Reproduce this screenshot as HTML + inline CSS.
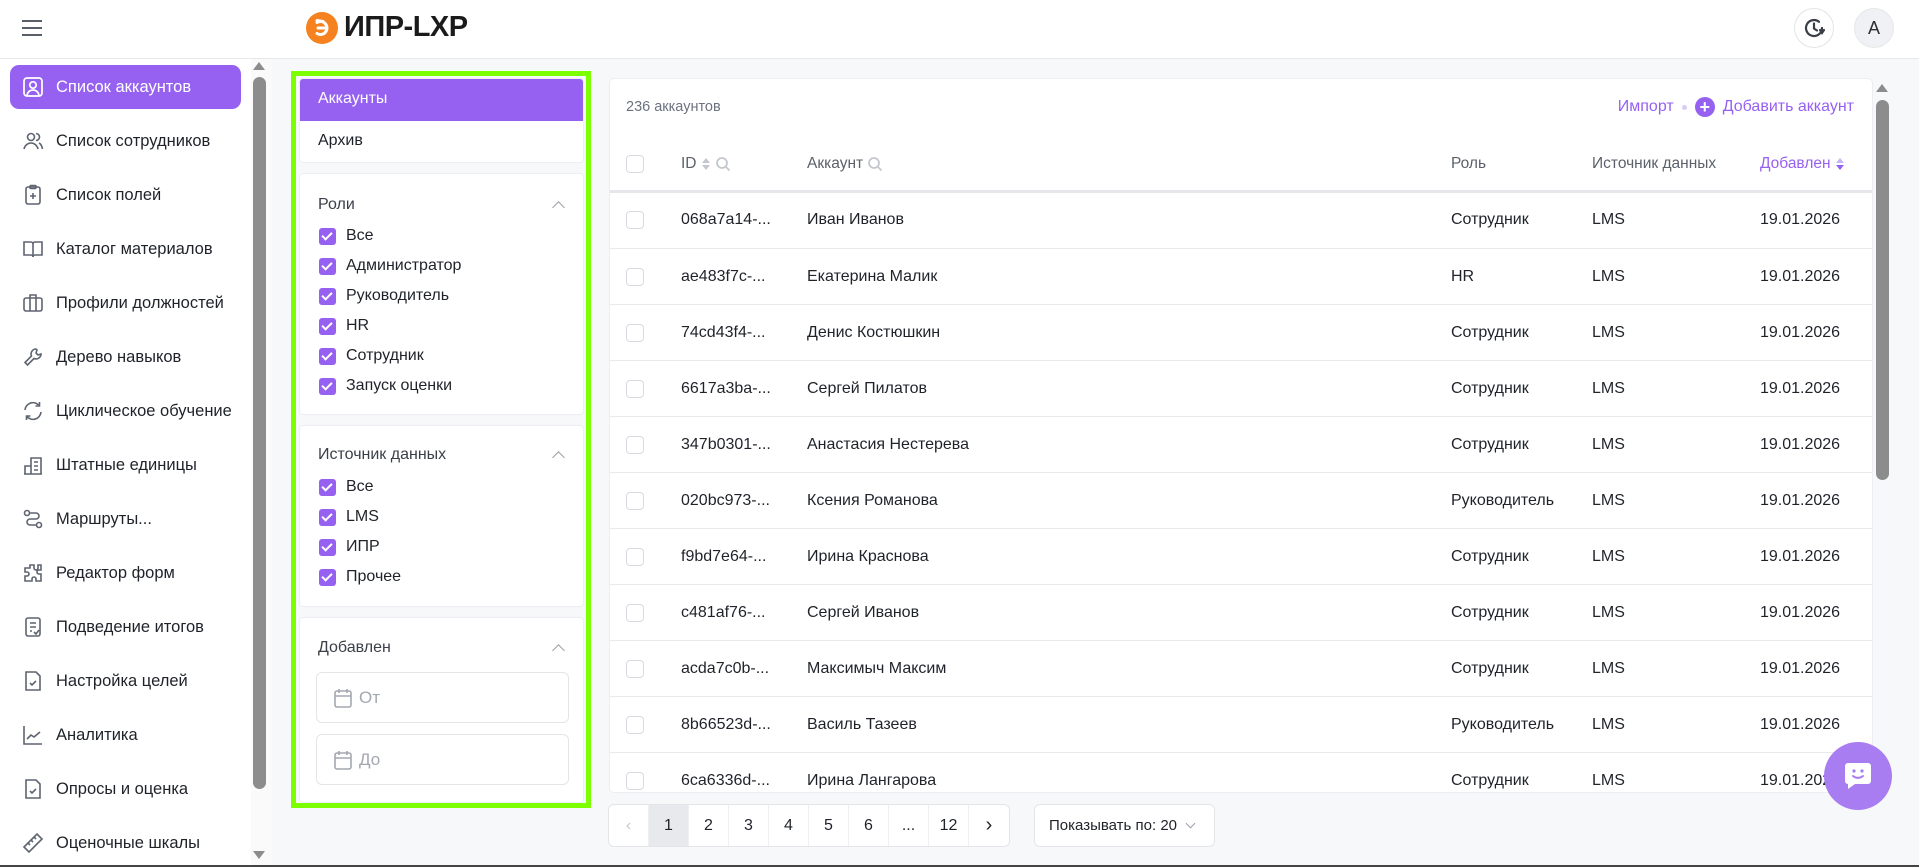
<!DOCTYPE html>
<html><head><meta charset="utf-8"><style>
*{box-sizing:border-box;margin:0;padding:0}
body{width:1919px;height:867px;overflow:hidden;background:#fff;font-family:"Liberation Sans",sans-serif;color:#1f2329;position:relative}
.a{position:absolute}
.hdr{left:0;top:0;width:1919px;height:59px;background:#fff;border-bottom:1px solid #e6e8ec}
.main{left:272px;top:59px;width:1647px;height:806px;background:#f7f8fa}
.nav{left:10px;width:231px;height:44px;border-radius:9px;font-size:16.5px;display:flex;align-items:center;padding-left:46px;color:#1f2329}
.nav svg{position:absolute;left:12px;top:11px}
.nav.act{background:#9661f1;color:#fff}
.sb{left:253px;top:77px;width:13px;height:712px;background:#8c8c8c;border-radius:7px}
.fp{left:291px;top:71px;width:300px;height:737px;border:5px solid #7cff00;background:#f7f8fa}
.card{background:#fff;border:1px solid #eceef1;border-radius:4px}
.cb{width:17px;height:17px;border-radius:3px;background:#9661f1;display:inline-block;position:relative}
.cb:after{content:"";position:absolute;left:5px;top:2px;width:4px;height:8px;border:solid #fff;border-width:0 2px 2px 0;transform:rotate(45deg)}
.fi{display:flex;align-items:center;gap:10px;font-size:16px;height:30px}
.ttl{font-size:16px;color:#3b4048}
.chev{width:9px;height:9px;border-left:1.5px solid #9aa0a8;border-top:1.5px solid #9aa0a8;transform:rotate(45deg)}
.inp{border:1px solid #e3e5e9;border-radius:6px;height:51px;display:flex;align-items:center;padding-left:16px;color:#a3a8b0;font-size:17px;gap:6px}
.tbl{left:609px;top:78px;width:1264px;height:715px;background:#fff;border:1px solid #eceef1;border-radius:5px;overflow:hidden}
.row{position:absolute;left:0;width:1264px;height:56px;border-top:1px solid #e8e9ec;font-size:16px;color:#1f2329}
.row span{position:absolute;top:19px}
.ck{position:absolute;left:16px;width:18px;height:18px;border:1px solid #d7dae0;border-radius:4px;background:#fff}
.pg{left:608px;top:804px;height:43px;display:flex;border:1px solid #e3e5e9;border-radius:6px;background:#fff;overflow:hidden}
.pg div{width:40px;height:41px;display:flex;align-items:center;justify-content:center;font-size:16px;border-right:1px solid #eef0f2}
.srt{display:inline-block;vertical-align:middle;margin-left:4px}
</style></head><body>
<div class="a hdr"></div>
<div class="a" style="left:22px;top:20px;width:20px;height:2px;background:#5a6069;box-shadow:0 7px 0 #5a6069,0 14px 0 #5a6069"></div>
<svg class="a" style="left:306px;top:12px" width="32" height="32" viewBox="0 0 32 32"><circle cx="16" cy="16" r="16" fill="#f5821f"/><path d="M11 10.5a6.5 6.5 0 1 1 0 11M12 16h8M17 9.5l-6 -1" stroke="#fff" stroke-width="3" fill="none" stroke-linecap="round"/></svg>
<div class="a" style="left:344px;top:11px;font-size:29px;font-weight:bold;color:#1b1b1b;letter-spacing:-0.5px">ИПР-LXP</div>
<div class="a" style="left:1794px;top:8px;width:40px;height:40px;border:1px solid #e2e4e8;border-radius:50%;background:#fff"></div>
<svg class="a" style="left:1803px;top:17px" width="22" height="22" viewBox="0 0 22 22" fill="none" stroke="#3a3f47" stroke-width="2.2" stroke-linecap="round"><path d="M19 11a8 8 0 1 1-3-6.2"/><path d="M11 6.5v5l3 2"/><path d="M17 13l2 3 2-3"/></svg>
<div class="a" style="left:1854px;top:8px;width:40px;height:40px;border-radius:50%;background:#f0f1f4;border:1px solid #e6e7ea;display:flex;align-items:center;justify-content:center;font-size:18px;color:#2b2f36">A</div>

<div class="a main"></div>
<div class="a" style="left:251px;top:59px;width:21px;height:806px;background:#fafafa"></div>
<div class="a" style="left:253px;top:62px;width:0;height:0;border-left:6.5px solid transparent;border-right:6.5px solid transparent;border-bottom:8px solid #8c8c8c"></div>
<div class="a sb"></div>
<div class="a" style="left:253px;top:851px;width:0;height:0;border-left:6.5px solid transparent;border-right:6.5px solid transparent;border-top:8px solid #8c8c8c"></div>

<div class="a nav act" style="top:65px"><svg width="22" height="22" viewBox="0 0 22 22" fill="none" stroke="#fff" stroke-width="1.7"><rect x="2" y="2" width="18" height="18" rx="3"/><circle cx="11" cy="9" r="3.2"/><path d="M5 19c1-3.5 3.5-5 6-5s5 1.5 6 5"/></svg>Список аккаунтов</div>
<div class="a nav" style="top:119px"><svg width="22" height="22" viewBox="0 0 22 22" fill="none" stroke="#5e6470" stroke-width="1.6"><circle cx="9" cy="7" r="3.5"/><path d="M2 19c1-4 4-6 7-6s6 2 7 6M14 3.5a3.5 3.5 0 0 1 0 7M17 13c2 1 3 3 3.5 6"/></svg>Список сотрудников</div>
<div class="a nav" style="top:173px"><svg width="22" height="22" viewBox="0 0 22 22" fill="none" stroke="#5e6470" stroke-width="1.6"><rect x="4" y="3" width="14" height="17" rx="2"/><rect x="8" y="1.5" width="6" height="3" rx="1"/><path d="M11 9v6M8 12h6"/></svg>Список полей</div>
<div class="a nav" style="top:227px"><svg width="22" height="22" viewBox="0 0 22 22" fill="none" stroke="#5e6470" stroke-width="1.6"><path d="M2 4h7a2 2 0 0 1 2 2v13a2 2 0 0 0-2-2H2zM20 4h-7a2 2 0 0 0-2 2v13a2 2 0 0 1 2-2h7z"/></svg>Каталог материалов</div>
<div class="a nav" style="top:281px"><svg width="22" height="22" viewBox="0 0 22 22" fill="none" stroke="#5e6470" stroke-width="1.6"><rect x="2" y="6" width="18" height="13" rx="2"/><path d="M8 6V3h6v3M8 6v13M14 6v13"/></svg>Профили должностей</div>
<div class="a nav" style="top:335px"><svg width="22" height="22" viewBox="0 0 22 22" fill="none" stroke="#5e6470" stroke-width="1.6"><path d="M14 3a5 5 0 0 0-4.5 7L3 16.5 5.5 19l6.5-6.5A5 5 0 0 0 19 8l-3 1-2-2 1-3z"/></svg>Дерево навыков</div>
<div class="a nav" style="top:389px"><svg width="22" height="22" viewBox="0 0 22 22" fill="none" stroke="#5e6470" stroke-width="1.6"><path d="M3 10a8 8 0 0 1 14.5-4M19 12a8 8 0 0 1-14.5 4M17.5 2v4h-4M4.5 20v-4h4"/></svg>Циклическое обучение</div>
<div class="a nav" style="top:443px"><svg width="22" height="22" viewBox="0 0 22 22" fill="none" stroke="#5e6470" stroke-width="1.6"><path d="M2 20h18M3 20v-8h6M9 20V4h10v16M12 8h4M12 12h4M12 16h4"/></svg>Штатные единицы</div>
<div class="a nav" style="top:497px"><svg width="22" height="22" viewBox="0 0 22 22" fill="none" stroke="#5e6470" stroke-width="1.6"><circle cx="5" cy="5" r="2.5"/><circle cx="17" cy="17" r="2.5"/><path d="M8 5h6a3 3 0 0 1 0 6H8a3 3 0 0 0 0 6h6"/></svg>Маршруты...</div>
<div class="a nav" style="top:551px"><svg width="22" height="22" viewBox="0 0 22 22" fill="none" stroke="#5e6470" stroke-width="1.6"><path d="M8 3h4v3a2 2 0 0 0 4 0V3h3v5h-2a2 2 0 0 0 0 4h2v7h-5v-2a2 2 0 0 0-4 0v2H3v-5h2a2 2 0 0 0 0-4H3V6h5z"/></svg>Редактор форм</div>
<div class="a nav" style="top:605px"><svg width="22" height="22" viewBox="0 0 22 22" fill="none" stroke="#5e6470" stroke-width="1.6"><rect x="4" y="2" width="14" height="18" rx="2"/><path d="M8 7h6M8 11h6M8 15h2M12 16l2 2 3-4"/></svg>Подведение итогов</div>
<div class="a nav" style="top:659px"><svg width="22" height="22" viewBox="0 0 22 22" fill="none" stroke="#5e6470" stroke-width="1.6"><path d="M4 2h10l4 4v14H4z"/><path d="M8 13l2 2 4-4"/></svg>Настройка целей</div>
<div class="a nav" style="top:713px"><svg width="22" height="22" viewBox="0 0 22 22" fill="none" stroke="#5e6470" stroke-width="1.6"><path d="M2 2v18h18M5 15l4-4 3 2 6-5"/></svg>Аналитика</div>
<div class="a nav" style="top:767px"><svg width="22" height="22" viewBox="0 0 22 22" fill="none" stroke="#5e6470" stroke-width="1.6"><path d="M4 2h10l4 4v14H4z"/><path d="M8 13l2 2 4-4"/></svg>Опросы и оценка</div>
<div class="a nav" style="top:821px"><svg width="22" height="22" viewBox="0 0 22 22" fill="none" stroke="#5e6470" stroke-width="1.6"><path d="M2 15L15 2l5 5L7 20zM6 11l2 2M9 8l2 2M12 5l2 2"/></svg>Оценочные шкалы</div>

<div class="a fp">
 <div class="card" style="position:absolute;left:3px;top:2px;width:285px;height:85px;overflow:hidden">
  <div style="height:42px;background:#9661f1;color:#fff;font-size:16px;padding:11px 0 0 18px">Аккаунты</div>
  <div style="font-size:16px;padding:11px 0 0 18px">Архив</div>
 </div>
 <div class="card" style="position:absolute;left:3px;top:97px;width:285px;height:242px">
  <div class="ttl" style="position:absolute;left:18px;top:22px">Роли</div><div class="chev" style="position:absolute;right:20px;top:29px"></div>
  <div style="position:absolute;left:19px;top:47px">
   <div class="fi"><i class="cb"></i>Все</div><div class="fi"><i class="cb"></i>Администратор</div><div class="fi"><i class="cb"></i>Руководитель</div><div class="fi"><i class="cb"></i>HR</div><div class="fi"><i class="cb"></i>Сотрудник</div><div class="fi"><i class="cb"></i>Запуск оценки</div>
  </div>
 </div>
 <div class="card" style="position:absolute;left:3px;top:349px;width:285px;height:182px">
  <div class="ttl" style="position:absolute;left:18px;top:20px">Источник данных</div><div class="chev" style="position:absolute;right:20px;top:27px"></div>
  <div style="position:absolute;left:19px;top:46px">
   <div class="fi"><i class="cb"></i>Все</div><div class="fi"><i class="cb"></i>LMS</div><div class="fi"><i class="cb"></i>ИПР</div><div class="fi"><i class="cb"></i>Прочее</div>
  </div>
 </div>
 <div class="card" style="position:absolute;left:3px;top:541px;width:285px;height:186px">
  <div class="ttl" style="position:absolute;left:18px;top:21px">Добавлен</div><div class="chev" style="position:absolute;right:20px;top:28px"></div>
  <div class="inp" style="position:absolute;left:16px;top:54px;width:253px"><svg width="20" height="22" viewBox="0 0 20 22" fill="none" stroke="#a3a8b0" stroke-width="1.6"><rect x="2" y="4" width="16" height="16" rx="2"/><path d="M2 9h16M6 2v4M14 2v4"/></svg>От</div>
  <div class="inp" style="position:absolute;left:16px;top:116px;width:253px"><svg width="20" height="22" viewBox="0 0 20 22" fill="none" stroke="#a3a8b0" stroke-width="1.6"><rect x="2" y="4" width="16" height="16" rx="2"/><path d="M2 9h16M6 2v4M14 2v4"/></svg>До</div>
 </div>
</div>

<div class="a tbl">
 <div style="position:absolute;left:16px;top:20px;font-size:14.5px;color:#6b7280">236 аккаунтов</div>
 <div style="position:absolute;right:18px;top:18px;font-size:16px;color:#9661f1;display:flex;align-items:center;gap:8px">Импорт <span style="width:5px;height:5px;border-radius:50%;background:#d9ccf7;display:inline-block"></span><span style="width:20px;height:20px;border-radius:50%;background:#9661f1;color:#fff;display:inline-flex;align-items:center;justify-content:center;font-size:18px;font-weight:bold;line-height:1">+</span>Добавить аккаунт</div>
 <div style="position:absolute;left:0;top:60px;width:1264px;height:52px;font-size:15.5px;color:#5b616b">
  <div class="ck" style="top:16px"></div>
  <span style="position:absolute;left:71px;top:16px">ID<svg class="srt" width="10" height="14" viewBox="0 0 10 14"><path d="M5 1l4 5H1zM5 13l4-5H1z" fill="#c4c8ce"/></svg><svg class="srt" width="16" height="16" viewBox="0 0 16 16" fill="none" stroke="#c4c8ce" stroke-width="1.8"><circle cx="7" cy="7" r="5"/><path d="M11 11l3.5 3.5"/></svg></span>
  <span style="position:absolute;left:197px;top:16px">Аккаунт<svg class="srt" width="16" height="16" viewBox="0 0 16 16" fill="none" stroke="#c4c8ce" stroke-width="1.8"><circle cx="7" cy="7" r="5"/><path d="M11 11l3.5 3.5"/></svg></span>
  <span style="position:absolute;left:841px;top:16px">Роль</span>
  <span style="position:absolute;left:982px;top:16px">Источник данных</span>
  <span style="position:absolute;left:1150px;top:16px;color:#9661f1">Добавлен<svg class="srt" width="10" height="14" viewBox="0 0 10 14"><path d="M5 1l4 5H1z" fill="#c9b3f7"/><path d="M5 13l4-5H1z" fill="#9661f1"/></svg></span>
 </div>
 <div style="position:absolute;left:0;top:111px;width:1264px;height:3px;background:#e6e7eb"></div>
 <div class="row" style="top:113px;border-top:none"><div class="ck" style="top:19px"></div><span style="left:71px">068a7a14-...</span><span style="left:197px">Иван Иванов</span><span style="left:841px">Сотрудник</span><span style="left:982px">LMS</span><span style="left:1150px">19.01.2026</span></div>
 <div class="row" style="top:169px"><div class="ck" style="top:19px"></div><span style="left:71px">ae483f7c-...</span><span style="left:197px">Екатерина Малик</span><span style="left:841px">HR</span><span style="left:982px">LMS</span><span style="left:1150px">19.01.2026</span></div>
 <div class="row" style="top:225px"><div class="ck" style="top:19px"></div><span style="left:71px">74cd43f4-...</span><span style="left:197px">Денис Костюшкин</span><span style="left:841px">Сотрудник</span><span style="left:982px">LMS</span><span style="left:1150px">19.01.2026</span></div>
 <div class="row" style="top:281px"><div class="ck" style="top:19px"></div><span style="left:71px">6617a3ba-...</span><span style="left:197px">Сергей Пилатов</span><span style="left:841px">Сотрудник</span><span style="left:982px">LMS</span><span style="left:1150px">19.01.2026</span></div>
 <div class="row" style="top:337px"><div class="ck" style="top:19px"></div><span style="left:71px">347b0301-...</span><span style="left:197px">Анастасия Нестерева</span><span style="left:841px">Сотрудник</span><span style="left:982px">LMS</span><span style="left:1150px">19.01.2026</span></div>
 <div class="row" style="top:393px"><div class="ck" style="top:19px"></div><span style="left:71px">020bc973-...</span><span style="left:197px">Ксения Романова</span><span style="left:841px">Руководитель</span><span style="left:982px">LMS</span><span style="left:1150px">19.01.2026</span></div>
 <div class="row" style="top:449px"><div class="ck" style="top:19px"></div><span style="left:71px">f9bd7e64-...</span><span style="left:197px">Ирина Краснова</span><span style="left:841px">Сотрудник</span><span style="left:982px">LMS</span><span style="left:1150px">19.01.2026</span></div>
 <div class="row" style="top:505px"><div class="ck" style="top:19px"></div><span style="left:71px">c481af76-...</span><span style="left:197px">Сергей Иванов</span><span style="left:841px">Сотрудник</span><span style="left:982px">LMS</span><span style="left:1150px">19.01.2026</span></div>
 <div class="row" style="top:561px"><div class="ck" style="top:19px"></div><span style="left:71px">acda7c0b-...</span><span style="left:197px">Максимыч Максим</span><span style="left:841px">Сотрудник</span><span style="left:982px">LMS</span><span style="left:1150px">19.01.2026</span></div>
 <div class="row" style="top:617px"><div class="ck" style="top:19px"></div><span style="left:71px">8b66523d-...</span><span style="left:197px">Василь Тазеев</span><span style="left:841px">Руководитель</span><span style="left:982px">LMS</span><span style="left:1150px">19.01.2026</span></div>
 <div class="row" style="top:673px"><div class="ck" style="top:19px"></div><span style="left:71px">6ca6336d-...</span><span style="left:197px">Ирина Лангарова</span><span style="left:841px">Сотрудник</span><span style="left:982px">LMS</span><span style="left:1150px">19.01.2026</span></div>
</div>
<div class="a" style="left:1876px;top:84px;width:0;height:0;border-left:6.5px solid transparent;border-right:6.5px solid transparent;border-bottom:8px solid #8c8c8c"></div>
<div class="a" style="left:1876px;top:100px;width:13px;height:380px;background:#8c8c8c;border-radius:7px"></div>

<div class="a pg"><div style="color:#c4c8ce">‹</div><div style="background:#e8e9ec">1</div><div>2</div><div>3</div><div>4</div><div>5</div><div>6</div><div>...</div><div>12</div><div style="border-right:none;font-size:20px">›</div></div>
<div class="a" style="left:1034px;top:804px;width:181px;height:43px;border:1px solid #e3e5e9;border-radius:6px;background:#fff;font-size:15px;display:flex;align-items:center;padding-left:14px;gap:10px">Показывать по: 20 <span style="width:7px;height:7px;border-right:1.3px solid #9aa0a8;border-bottom:1.3px solid #9aa0a8;transform:rotate(45deg);margin-top:-4px"></span></div>

<div class="a" style="left:1824px;top:742px;width:68px;height:68px;border-radius:50%;background:#a97df2"></div>
<svg class="a" style="left:1842px;top:760px" width="32" height="32" viewBox="0 0 32 32"><path d="M6 3h20a3 3 0 0 1 3 3v15a3 3 0 0 1-3 3H13l-7 5v-5a3 3 0 0 1-3-3V6a3 3 0 0 1 3-3z" fill="#fff"/><circle cx="12" cy="11" r="1.6" fill="#a97df2"/><circle cx="20" cy="11" r="1.6" fill="#a97df2"/><path d="M11 16c3 2.5 7 2.5 10 0" stroke="#a97df2" stroke-width="2" fill="none" stroke-linecap="round"/></svg>
<div class="a" style="left:0;top:865px;width:1919px;height:2px;background:#444"></div>
</body></html>
